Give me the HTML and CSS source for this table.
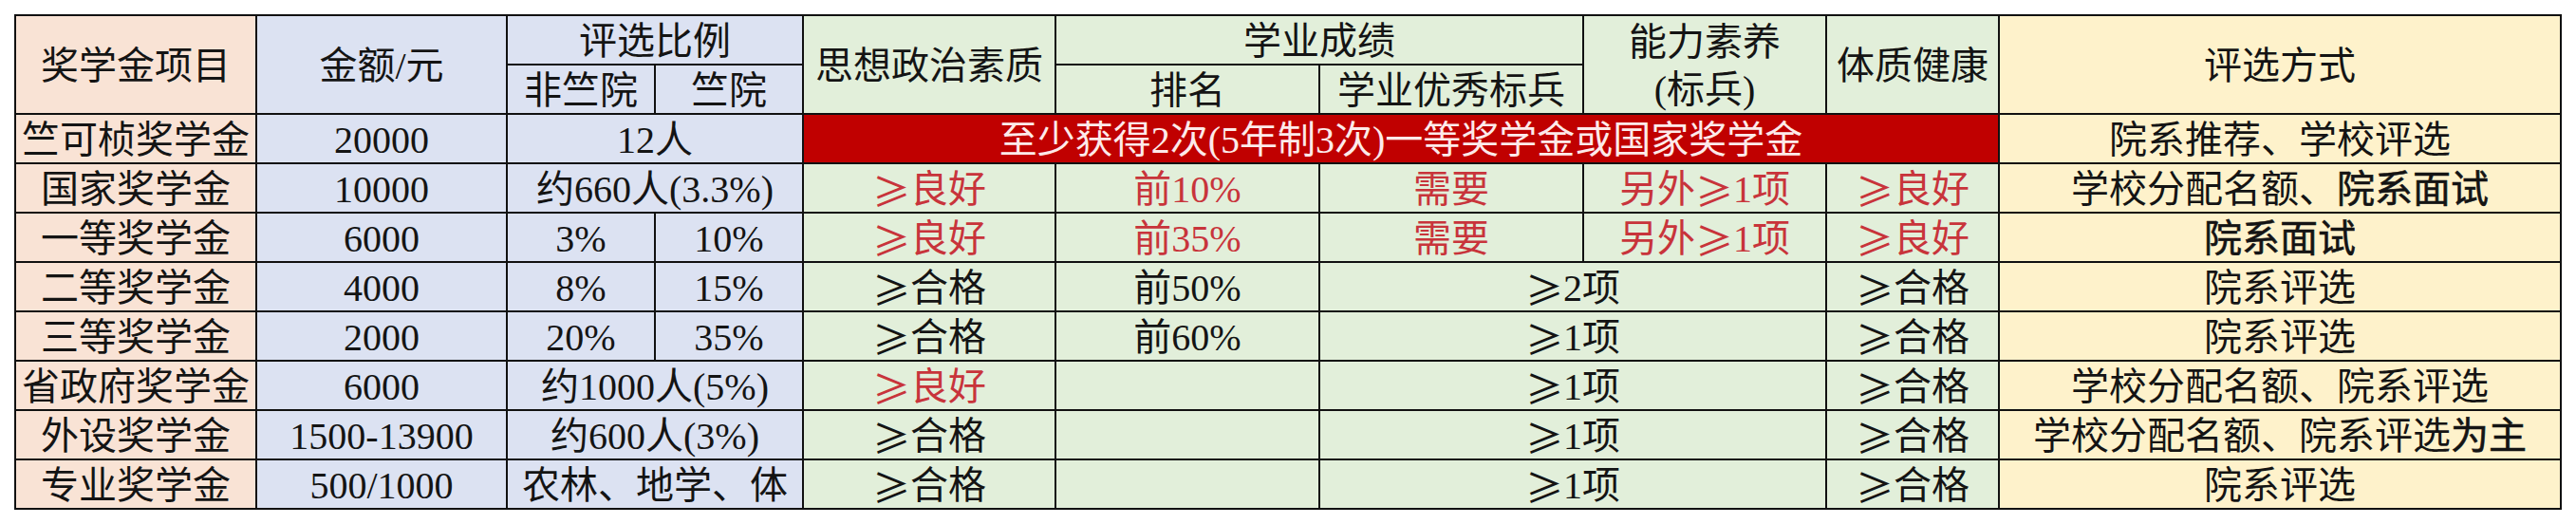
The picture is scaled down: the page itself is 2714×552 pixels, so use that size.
FILE: index.html
```html
<!DOCTYPE html>
<html lang="zh-CN">
<head>
<meta charset="utf-8">
<title>奖学金评选</title>
<link rel="stylesheet" href="styles.css">
</head>
<body>
<div class="sheet">
  <div class="cell peach r2">奖学金项目</div>
  <div class="cell blue r2">金额/元</div>
  <div class="cell blue c2">评选比例</div>
  <div class="cell green r2">思想政治素质</div>
  <div class="cell green c2">学业成绩</div>
  <div class="cell green r2 two">能力素养<br>(标兵)</div>
  <div class="cell green r2">体质健康</div>
  <div class="cell yellow r2">评选方式</div>
  <div class="cell blue">非竺院</div>
  <div class="cell blue">竺院</div>
  <div class="cell green">排名</div>
  <div class="cell green">学业优秀标兵</div>

  <div class="cell peach">竺可桢奖学金</div>
  <div class="cell blue">20000</div>
  <div class="cell blue c2">12人</div>
  <div class="cell band c5">至少获得2次(5年制3次)一等奖学金或国家奖学金</div>
  <div class="cell yellow">院系推荐、学校评选</div>

  <div class="cell peach">国家奖学金</div>
  <div class="cell blue">10000</div>
  <div class="cell blue c2">约660人(3.3%)</div>
  <div class="cell green red"><span class="ge">≥</span>良好</div>
  <div class="cell green red">前10%</div>
  <div class="cell green red">需要</div>
  <div class="cell green red">另外<span class="ge">≥</span>1项</div>
  <div class="cell green red"><span class="ge">≥</span>良好</div>
  <div class="cell yellow">学校分配名额、<span class="em">院系面试</span></div>

  <div class="cell peach">一等奖学金</div>
  <div class="cell blue">6000</div>
  <div class="cell blue">3%</div>
  <div class="cell blue">10%</div>
  <div class="cell green red"><span class="ge">≥</span>良好</div>
  <div class="cell green red">前35%</div>
  <div class="cell green red">需要</div>
  <div class="cell green red">另外<span class="ge">≥</span>1项</div>
  <div class="cell green red"><span class="ge">≥</span>良好</div>
  <div class="cell yellow"><span class="em">院系面试</span></div>

  <div class="cell peach">二等奖学金</div>
  <div class="cell blue">4000</div>
  <div class="cell blue">8%</div>
  <div class="cell blue">15%</div>
  <div class="cell green"><span class="ge">≥</span>合格</div>
  <div class="cell green">前50%</div>
  <div class="cell green c2"><span class="ge">≥</span>2项</div>
  <div class="cell green"><span class="ge">≥</span>合格</div>
  <div class="cell yellow">院系评选</div>

  <div class="cell peach">三等奖学金</div>
  <div class="cell blue">2000</div>
  <div class="cell blue">20%</div>
  <div class="cell blue">35%</div>
  <div class="cell green"><span class="ge">≥</span>合格</div>
  <div class="cell green">前60%</div>
  <div class="cell green c2"><span class="ge">≥</span>1项</div>
  <div class="cell green"><span class="ge">≥</span>合格</div>
  <div class="cell yellow">院系评选</div>

  <div class="cell peach">省政府奖学金</div>
  <div class="cell blue">6000</div>
  <div class="cell blue c2">约1000人(5%)</div>
  <div class="cell green red"><span class="ge">≥</span>良好</div>
  <div class="cell green"></div>
  <div class="cell green c2"><span class="ge">≥</span>1项</div>
  <div class="cell green"><span class="ge">≥</span>合格</div>
  <div class="cell yellow">学校分配名额、院系评选</div>

  <div class="cell peach">外设奖学金</div>
  <div class="cell blue">1500-13900</div>
  <div class="cell blue c2">约600人(3%)</div>
  <div class="cell green"><span class="ge">≥</span>合格</div>
  <div class="cell green"></div>
  <div class="cell green c2"><span class="ge">≥</span>1项</div>
  <div class="cell green"><span class="ge">≥</span>合格</div>
  <div class="cell yellow">学校分配名额、院系评选<span class="em">为主</span></div>

  <div class="cell peach">专业奖学金</div>
  <div class="cell blue">500/1000</div>
  <div class="cell blue c2">农林、地学、体</div>
  <div class="cell green"><span class="ge">≥</span>合格</div>
  <div class="cell green"></div>
  <div class="cell green c2"><span class="ge">≥</span>1项</div>
  <div class="cell green"><span class="ge">≥</span>合格</div>
  <div class="cell yellow">院系评选</div>
</div>
</body>
</html>
```

FILE: styles.css
```css
html, body {
  margin: 0;
  padding: 0;
  background: #ffffff;
}

.sheet {
  display: grid;
  grid-template-columns: 252px 262px 154px 154px 264px 276px 276px 254px 180px 590px;
  grid-template-rows: repeat(10, 50px);
  gap: 2px;
  width: max-content;
  margin: 15px 0 0 15px;
  background: #111111;
  border: 2px solid #111111;
  font-family: "Liberation Serif", "Noto Sans CJK SC", serif;
  font-size: 40px;
  color: #141414;
}

.cell {
  display: flex;
  align-items: center;
  justify-content: center;
  white-space: nowrap;
  line-height: 1.15;
  padding-top: 3px;
  box-sizing: border-box;
}

.r2 { grid-row: span 2; }
.c2 { grid-column: span 2; }
.c5 { grid-column: span 5; }

.two {
  text-align: center;
  line-height: 1.25;
}

.peach { background: #f9e3d5; }
.blue { background: #dce2f2; }
.green { background: #e2efda; }
.yellow { background: #fef2cb; }

.band {
  background: #c00000;
  color: #fdeaea;
}

.red { color: #c8343b; }

.ge {
  font-family: "Noto Sans CJK SC", sans-serif;
}

.em {
  -webkit-text-stroke: 0.6px currentColor;
}
```
